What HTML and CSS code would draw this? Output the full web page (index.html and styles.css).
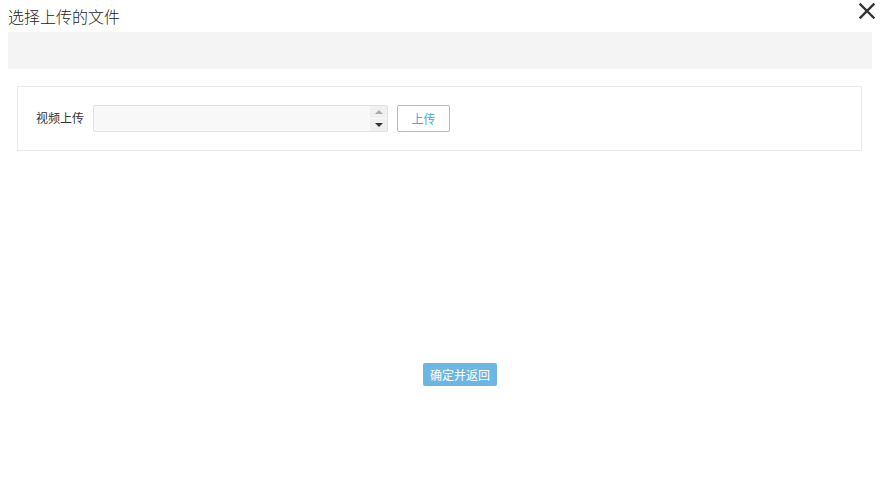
FILE: index.html
```html
<!DOCTYPE html>
<html lang="zh">
<head>
<meta charset="utf-8">
<link rel="stylesheet" href="styles.css">
</head>
<body>
<div class="dialog">
  <div class="header">
    <span class="title">选择上传的文件</span>
    <svg class="close" width="18" height="18" viewBox="0 0 18 18"><path d="M2.5 2.5 L15.5 15.5 M15.5 2.5 L2.5 15.5" stroke="#333" stroke-width="2.4" stroke-linecap="square"/></svg>
  </div>
  <div class="bar"></div>
  <div class="panel">
    <span class="label">视频上传</span>
    <div class="field">
      <div class="field-text"></div>
      <div class="spin">
        <div class="spin-btn"><span class="tri-up"></span></div>
        <div class="spin-btn"><span class="tri-down"></span></div>
      </div>
    </div>
    <button class="upload">上传</button>
  </div>
  <div class="footer">
    <button class="confirm">确定并返回</button>
  </div>
</div>
</body>
</html>
```
FILE: styles.css
```css
html, body { margin: 0; padding: 0; background: #fff; }
body { font-family: "Microsoft YaHei", "Noto Sans CJK SC", sans-serif; color: #333; }
.dialog { padding: 0 12px 0 8px; }
.header { height: 32px; display: flex; align-items: flex-start; justify-content: space-between; position: relative; }
.title { font-size: 16px; line-height: 16px; margin-top: 8px; color: #222; font-weight: 300; }
.close { position: absolute; right: -4px; top: 2px; }
.bar { height: 37px; background: #f4f4f4; }
.panel { margin: 17px 10px 0 9px; border: 1px solid #ebebeb; display: flex; align-items: flex-start; padding: 18px 0 0 18px; box-sizing: border-box; height: 65px; }
.label { font-size: 12px; line-height: 26px; color: #333; width: 57px; }
.field { width: 295px; height: 27px; box-sizing: border-box; border: 1px solid #e0e0e0; border-radius: 2px; background: #f8f8f8; display: flex; }
.field-text { flex: 1; }
.spin { width: 17px; display: flex; flex-direction: column; }
.spin-btn { flex: 1; display: flex; align-items: center; justify-content: center; background: #f0f0f0; }
.spin-btn + .spin-btn { border-top: 1px solid #fafafa; }
.tri-up { width: 0; height: 0; border-left: 4px solid transparent; border-right: 4px solid transparent; border-bottom: 4px solid #aaa; }
.tri-down { width: 0; height: 0; border-left: 4px solid transparent; border-right: 4px solid transparent; border-top: 4px solid #333; }
.upload { margin-left: 9px; width: 53px; height: 27px; box-sizing: border-box; border: 1px solid #8fc4e6; border-radius: 2px; background: #fff; color: #4aa8e0; font-family: inherit; font-size: 12px; padding: 0; }
.footer { margin-top: 210px; padding-left: 415px; }
.confirm { width: 74px; height: 23px; padding: 0; border: none; border-radius: 2px; background: #6cb6e4; color: #fff; font-family: inherit; font-size: 12px; line-height: 23px; }
```
